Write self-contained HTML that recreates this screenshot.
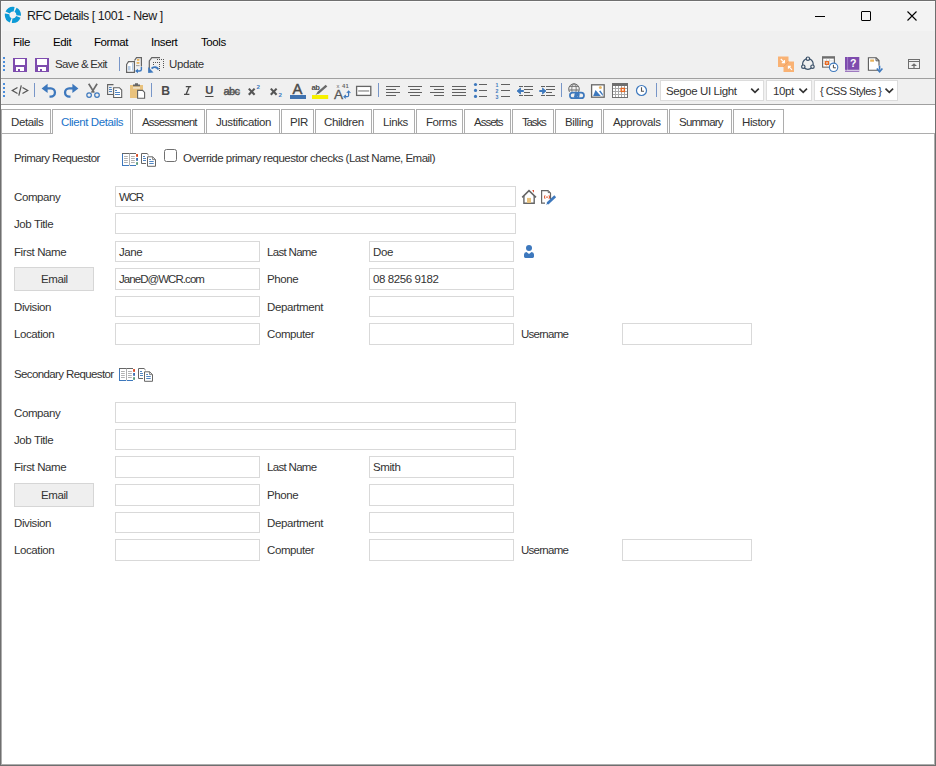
<!DOCTYPE html>
<html><head><meta charset="utf-8">
<style>
*{box-sizing:border-box}
html,body{margin:0;padding:0}
body{width:936px;height:766px;overflow:hidden;position:relative;background:#f0f0f0;font-family:"Liberation Sans",sans-serif;font-size:11px;color:#000}
.a{position:absolute}
.t{position:absolute;white-space:pre;line-height:13px;font-size:11.5px;letter-spacing:-0.4px}
svg{position:absolute;overflow:visible}
#frame{left:0;top:0;width:936px;height:766px;border:1px solid #6f6f6f;pointer-events:none;z-index:50}
.sep{position:absolute;width:1px;background:#7896c8}
.lbl{color:#333}
.inp{position:absolute;background:#fff;border:1px solid #d9d9d9;height:21px}
.itx{position:absolute;white-space:pre;line-height:13px;font-size:11.5px;letter-spacing:-0.4px;color:#333}
.btn{position:absolute;background:#efefef;border:1px solid #d6d6d6;width:80px;height:24px}
.tab{position:absolute;top:109px;height:25px;border:1px solid #adadad;background:#fff}
.tab span{position:absolute;top:6px;white-space:pre;line-height:13px;font-size:11.5px;letter-spacing:-0.4px;color:#333}
.dd{position:absolute;top:80px;height:21px;background:#fff;border:1px solid #dcdcdc}
</style></head><body>
<div class="a" id="frame"></div>
<div class="a" style="left:1px;top:1px;width:934px;height:30px;background:#f3f3f3"></div>
<div class="a" style="left:1px;top:1px;width:934px;height:1px;background:#fbfbfb"></div>
<div class="a" style="left:1px;top:1px;width:1px;height:103px;background:#f7f7f7"></div>

<!-- title bar -->
<svg style="left:0;top:0" width="30" height="30" viewBox="0 0 30 30">
  <circle cx="12.9" cy="14.9" r="5.8" fill="none" stroke="#0b9ad6" stroke-width="4.6" stroke-dasharray="7.6 1.5" stroke-dashoffset="-2.1"/>
</svg>
<div class="t" style="left:27px;top:10px;font-size:12.4px;letter-spacing:-0.45px;color:#1a1a1a">RFC Details [ 1001 - New ]</div>
<div class="a" style="left:815px;top:16px;width:10px;height:1px;background:#000"></div>
<div class="a" style="left:861px;top:11px;width:10px;height:10px;border:1px solid #000;border-radius:1px"></div>
<svg style="left:907px;top:11px" width="10" height="10" viewBox="0 0 10 10"><path d="M0.5 0.5 L9.5 9.5 M9.5 0.5 L0.5 9.5" stroke="#000" stroke-width="1.1"/></svg>

<!-- menu -->
<div class="t" style="left:13px;top:36px">File</div>
<div class="t" style="left:53px;top:36px">Edit</div>
<div class="t" style="left:94px;top:36px">Format</div>
<div class="t" style="left:151px;top:36px">Insert</div>
<div class="t" style="left:201px;top:36px">Tools</div>

<!-- toolbar 1 -->
<div id="tb1"></div>
<div class="t" style="left:55px;top:58px;color:#333;letter-spacing:-0.7px">Save &amp; Exit</div>
<div class="sep" style="left:119px;top:57px;height:14px"></div>
<div class="t" style="left:169px;top:58px;color:#333">Update</div>

<div class="a" style="left:1px;top:78px;width:934px;height:1px;background:#a0a0a0"></div>
<!-- toolbar 2 -->
<div id="tb2"></div>
<div class="sep" style="left:34px;top:83px;height:14px"></div>
<div class="sep" style="left:151px;top:83px;height:14px"></div>
<div class="sep" style="left:378px;top:83px;height:14px"></div>
<div class="sep" style="left:561px;top:83px;height:14px"></div>
<div class="sep" style="left:656px;top:83px;height:14px"></div>
<div class="dd" style="left:660px;width:104px"><span class="t" style="left:5px;top:4px;color:#333">Segoe UI Light</span></div>
<div class="dd" style="left:766px;width:46px"><span class="t" style="left:6px;top:4px;color:#333">10pt</span></div>
<div class="dd" style="left:814px;width:84px"><span class="t" style="left:5px;top:4px;color:#333;letter-spacing:-0.55px;font-size:11px">{ CSS Styles }</span></div>

<div class="a" style="left:1px;top:104px;width:934px;height:1px;background:#a0a0a0"></div>

<!-- tab strip & content -->
<div class="a" style="left:1px;top:105px;width:934px;height:660px;background:#fff"></div>
<div class="a" style="left:1px;top:133px;width:934px;height:632px;border:1px solid #adadad"></div>

<div class="tab" style="left:1px;width:50px"><span style="left:9px">Details</span></div>
<div class="tab" style="left:52px;width:79px;border-bottom:none"><span style="left:8px;color:#1a73c9">Client Details</span></div>
<div class="tab" style="left:132px;width:73px"><span style="left:9px;letter-spacing:-0.8px">Assessment</span></div>
<div class="tab" style="left:206px;width:74px"><span style="left:9px">Justification</span></div>
<div class="tab" style="left:281px;width:33px"><span style="left:8px">PIR</span></div>
<div class="tab" style="left:315px;width:57px"><span style="left:8px">Children</span></div>
<div class="tab" style="left:373px;width:42px"><span style="left:9px">Links</span></div>
<div class="tab" style="left:416px;width:47px"><span style="left:9px">Forms</span></div>
<div class="tab" style="left:464px;width:47px"><span style="left:9px;letter-spacing:-1.0px">Assets</span></div>
<div class="tab" style="left:512px;width:42px"><span style="left:9px;letter-spacing:-1.15px">Tasks</span></div>
<div class="tab" style="left:555px;width:47px"><span style="left:9px">Billing</span></div>
<div class="tab" style="left:603px;width:65px"><span style="left:9px">Approvals</span></div>
<div class="tab" style="left:669px;width:63px"><span style="left:9px;letter-spacing:-0.77px">Summary</span></div>
<div class="tab" style="left:733px;width:51px"><span style="left:8px">History</span></div>

<!-- form -->
<div class="t lbl" style="left:14px;top:152px;letter-spacing:-0.6px">Primary Requestor</div>
<div class="t lbl" style="left:14px;top:191px">Company</div>
<div class="inp" style="left:115px;top:186px;width:401px;height:21px"><span class="itx" style="left:3px;top:4px;letter-spacing:-1.2px">WCR</span></div>
<div class="t lbl" style="left:14px;top:218px">Job Title</div>
<div class="inp" style="left:115px;top:213px;width:401px;height:21px"></div>
<div class="t lbl" style="left:14px;top:246px">First Name</div>
<div class="inp" style="left:115px;top:241px;width:145px;height:21px"><span class="itx" style="left:3px;top:4px">Jane</span></div>
<div class="t lbl" style="left:267px;top:246px;letter-spacing:-0.68px">Last Name</div>
<div class="inp" style="left:369px;top:241px;width:145px;height:21px"><span class="itx" style="left:3px;top:4px">Doe</span></div>
<div class="btn" style="left:14px;top:267px"><span class="t" style="left:26px;top:5px;color:#333">Email</span></div>
<div class="inp" style="left:115px;top:268px;width:145px;height:22px"><span class="itx" style="left:3px;top:4px;letter-spacing:-0.95px">JaneD@WCR.com</span></div>
<div class="t lbl" style="left:267px;top:273px">Phone</div>
<div class="inp" style="left:369px;top:268px;width:145px;height:22px"><span class="itx" style="left:3px;top:4px">08 8256 9182</span></div>
<div class="t lbl" style="left:14px;top:301px">Division</div>
<div class="inp" style="left:115px;top:296px;width:145px;height:21px"></div>
<div class="t lbl" style="left:267px;top:301px">Department</div>
<div class="inp" style="left:369px;top:296px;width:145px;height:21px"></div>
<div class="t lbl" style="left:14px;top:328px">Location</div>
<div class="inp" style="left:115px;top:323px;width:145px;height:22px"></div>
<div class="t lbl" style="left:267px;top:328px">Computer</div>
<div class="inp" style="left:369px;top:323px;width:145px;height:22px"></div>
<div class="t lbl" style="left:521px;top:328px;letter-spacing:-0.74px">Username</div>
<div class="inp" style="left:622px;top:323px;width:130px;height:22px"></div>
<div class="t lbl" style="left:183px;top:152px;letter-spacing:-0.5px">Override primary requestor checks (Last Name, Email)</div>
<div class="t lbl" style="left:14px;top:368px;letter-spacing:-0.62px">Secondary Requestor</div>
<div class="t lbl" style="left:14px;top:407px">Company</div>
<div class="inp" style="left:115px;top:402px;width:401px;height:21px"></div>
<div class="t lbl" style="left:14px;top:434px">Job Title</div>
<div class="inp" style="left:115px;top:429px;width:401px;height:21px"></div>
<div class="t lbl" style="left:14px;top:461px">First Name</div>
<div class="inp" style="left:115px;top:456px;width:145px;height:22px"></div>
<div class="t lbl" style="left:267px;top:461px;letter-spacing:-0.68px">Last Name</div>
<div class="inp" style="left:369px;top:456px;width:145px;height:22px"><span class="itx" style="left:3px;top:4px">Smith</span></div>
<div class="btn" style="left:14px;top:483px"><span class="t" style="left:26px;top:5px;color:#333">Email</span></div>
<div class="inp" style="left:115px;top:484px;width:145px;height:22px"></div>
<div class="t lbl" style="left:267px;top:489px">Phone</div>
<div class="inp" style="left:369px;top:484px;width:145px;height:22px"></div>
<div class="t lbl" style="left:14px;top:517px">Division</div>
<div class="inp" style="left:115px;top:512px;width:145px;height:21px"></div>
<div class="t lbl" style="left:267px;top:517px">Department</div>
<div class="inp" style="left:369px;top:512px;width:145px;height:21px"></div>
<div class="t lbl" style="left:14px;top:544px">Location</div>
<div class="inp" style="left:115px;top:539px;width:145px;height:22px"></div>
<div class="t lbl" style="left:267px;top:544px">Computer</div>
<div class="inp" style="left:369px;top:539px;width:145px;height:22px"></div>
<div class="t lbl" style="left:521px;top:544px;letter-spacing:-0.74px">Username</div>
<div class="inp" style="left:622px;top:539px;width:130px;height:22px"></div>
<!-- /form -->
<!-- icons -->
<svg class="a" style="left:0;top:0;z-index:20" width="936" height="766" viewBox="0 0 936 766">
<!-- grips -->
<g fill="#4b8ddb">
<rect x="3" y="57" width="2" height="2"/><rect x="3" y="61" width="2" height="2"/><rect x="3" y="65" width="2" height="2"/><rect x="3" y="69" width="2" height="2"/>
<rect x="3" y="83" width="2" height="2"/><rect x="3" y="87" width="2" height="2"/><rect x="3" y="91" width="2" height="2"/><rect x="3" y="95" width="2" height="2"/>
</g>
<!-- save icons -->
<g id="sv">
<rect x="13" y="58" width="14" height="14" fill="#7e4cae"/>
<path fill="#fff" d="M15 59 H25 V64.5 Q25 65 24.5 65 H15.5 Q15 65 15 64.5 Z"/>
<rect x="16" y="67" width="8" height="4" fill="#fff"/>
<rect x="18" y="69" width="2" height="2" fill="#7e4cae"/>
</g>
<g transform="translate(22 0)">
<rect x="13" y="58" width="14" height="14" fill="#7e4cae"/>
<path fill="#fff" d="M15 59 H25 V64.5 Q25 65 24.5 65 H15.5 Q15 65 15 64.5 Z"/>
<rect x="16" y="67" width="8" height="4" fill="#fff"/>
<rect x="18" y="69" width="2" height="2" fill="#7e4cae"/>
</g>
<!-- report icon -->
<g fill="none" stroke="#646464" stroke-width="1.2">
<path d="M126.6 64.5 L128.5 61.6 H134.4 V72.4 H126.6 Z" fill="#fff"/>
<path d="M134.5 60.5 L136.5 57.6 H141.4 V66.5"/>
</g>
<rect x="128" y="66" width="2.5" height="4.5" fill="#b7cde6"/>
<rect x="132" y="63" width="1.2" height="7.5" fill="#b7cde6"/>
<rect x="137" y="59" width="2.4" height="1.8" fill="#e8b35c"/>
<rect x="136.6" y="62" width="2.8" height="1.8" fill="#e8b35c"/>
<rect x="136" y="65.2" width="3.6" height="0.9" fill="#999"/>
<path d="M141.4 67 V69.5 Q141.4 71 139.5 71 H136.5" fill="none" stroke="#3d78bd" stroke-width="1.4"/>
<path d="M135 71 L138 68.8 V73.2 Z" fill="#3d78bd"/>
<!-- update icon -->
<path d="M149.3 72 V61 L151.8 57.6 H160" fill="none" stroke="#646464" stroke-width="1.2"/>
<g fill="#555">
<rect x="157" y="59" width="1" height="1"/><rect x="159" y="59" width="1" height="1"/><rect x="161" y="59" width="1" height="1"/><rect x="163" y="59" width="1" height="1"/>
<rect x="163" y="61" width="1" height="1"/><rect x="163" y="63" width="1" height="1"/><rect x="163" y="65" width="1" height="1"/><rect x="163" y="67" width="1" height="1"/>
<rect x="153" y="62" width="1" height="1"/><rect x="155" y="62" width="1" height="1"/><rect x="157" y="62" width="1" height="1"/><rect x="159" y="62" width="1" height="1"/>
<rect x="153" y="64" width="1" height="1"/><rect x="159" y="64" width="1" height="1"/><rect x="159" y="66" width="1" height="1"/><rect x="159" y="68" width="1" height="1"/><rect x="159" y="70" width="1" height="1"/>
</g>
<path d="M158.5 69.5 Q156 65.5 151.5 68.5" fill="none" stroke="#3d78bd" stroke-width="1.8"/>
<path d="M148.2 73 L148.2 67 L153.5 72.6 Z" fill="#3d78bd"/>

<!-- toolbar1 right icons -->
<rect x="778" y="56.5" width="10.5" height="10.5" fill="#f9b274"/>
<rect x="783.5" y="61.5" width="10.5" height="10.5" fill="#f9b274"/>
<path d="M783.3 66.7 L788.7 61.5" stroke="#f29c58" stroke-width="0.8"/>
<path d="M780.8 59 L784.4 62.6 M784.4 60 V62.6 H781.8" stroke="#fff" stroke-width="1.1" fill="none"/>
<path d="M792 69.8 L788.4 66.2 M788.4 68.8 V66.2 H791" stroke="#fff" stroke-width="1.1" fill="none"/>
<g fill="none" stroke="#3a5068" stroke-width="1.2">
<circle cx="807.9" cy="64" r="5.3"/>
<circle cx="807.9" cy="58.7" r="1.7" fill="#f0f0f0"/>
<circle cx="803.3" cy="66.7" r="1.7" fill="#f0f0f0"/>
<circle cx="812.5" cy="66.7" r="1.7" fill="#f0f0f0"/>
</g>
<rect x="822" y="56.2" width="13" height="11.5" fill="#6e6e6e"/>
<rect x="823.2" y="58.6" width="10.6" height="8" fill="#fff"/>
<g fill="#bbb"><rect x="823.2" y="60.7" width="10.6" height="0.5"/><rect x="823.2" y="63.2" width="10.6" height="0.5"/><rect x="826" y="58.6" width="0.5" height="8"/><rect x="829" y="58.6" width="0.5" height="8"/></g>
<rect x="825.4" y="61.7" width="3" height="2.7" fill="none" stroke="#e8671f" stroke-width="1.3"/>
<circle cx="833.6" cy="67.3" r="4.2" fill="#fff" stroke="#3d78bd" stroke-width="1.1"/>
<path d="M833.4 64.8 V67.8 H835.8" fill="none" stroke="#444" stroke-width="1"/>
<path d="M845 57 H859.3 V70.5 H846.5 Q845 70.5 845 69 Z" fill="#7e4cae"/>
<path d="M847.6 57 V70" stroke="#b99ad6" stroke-width="0.6"/>
<path d="M846.6 70.3 H859.3" stroke="#fff" stroke-width="0.9"/><path d="M845 71.3 H859.3" stroke="#7e4cae" stroke-width="0.9"/>

<text x="853.2" y="67.2" font-family="Liberation Sans" font-weight="bold" font-size="10.5" fill="#fff" text-anchor="middle">?</text>
<path d="M868.4 57.8 H876.2 L879 60.6 V70.3 H868.4 Z" fill="#fff" stroke="#5a5a5a" stroke-width="1.1"/>
<path d="M876 57.8 V60.8 H879" fill="none" stroke="#5a5a5a" stroke-width="1"/>
<rect x="870.2" y="59.5" width="3.8" height="2.2" fill="#e8b35c"/>
<path d="M879.6 65.6 V70" stroke="#fff" stroke-width="3"/>
<path d="M879.6 65.6 V69.8" stroke="#3d78bd" stroke-width="1.6"/>
<path d="M876.8 68.5 L879.6 71.8 L882.4 68.5" stroke="#3d78bd" stroke-width="1.6" fill="none"/>
<rect x="908.5" y="59.5" width="11" height="9" fill="none" stroke="#6e6e6e" stroke-width="1"/>
<path d="M908.5 61.5 H919.5" stroke="#6e6e6e" stroke-width="1"/>
<path d="M911 66 L914 63.2 L917 66 Z" fill="#6e6e6e"/>
<rect x="913.4" y="65" width="1.2" height="3" fill="#6e6e6e"/>

<!-- toolbar 2 -->
<path d="M17.5 87.5 L12.3 90.5 L17.5 93.5 M22.5 87.5 L27.7 90.5 L22.5 93.5 M21.3 85.3 L18.8 95.6" fill="none" stroke="#555" stroke-width="1.25"/>
<g fill="none" stroke="#3d78bd" stroke-width="2.3">
<path d="M45.5 88.4 H50.8 A4.15 4.15 0 0 1 50.8 96.7 H49.5"/>
<path d="M74.5 88.4 H69.2 A4.15 4.15 0 0 0 69.2 96.7 H70.5"/>
</g>
<path d="M41.6 88.4 L47.6 83.8 V93 Z" fill="#3d78bd"/>
<path d="M78.4 88.4 L72.4 83.8 V93 Z" fill="#3d78bd"/>
<!-- scissors -->
<path d="M88.7 83.8 L94.2 92.6 M97.1 83.8 L91.6 92.6" stroke="#6a6a6a" stroke-width="1.7" fill="none"/>
<circle cx="89.1" cy="95.1" r="2.3" fill="none" stroke="#3d78bd" stroke-width="1.2"/>
<circle cx="97" cy="95.1" r="2.3" fill="none" stroke="#3d78bd" stroke-width="1.2"/>
<!-- copy -->
<path d="M113.5 84.6 H107.6 V94.5 H113" fill="none" stroke="#626262" stroke-width="1.1"/>
<path d="M113.6 87.7 H119.4 L121.7 90 V97.5 H113.6 Z" fill="#fff" stroke="#626262" stroke-width="1.1"/>
<g fill="#3d78bd"><rect x="109" y="87" width="2.6" height="0.9"/><rect x="109" y="89" width="3" height="0.9"/><rect x="109" y="91" width="3" height="0.9"/>
<rect x="115" y="90.1" width="2" height="0.9"/><rect x="115" y="92.1" width="5" height="0.9"/><rect x="115" y="94.1" width="5" height="0.9"/></g>
<!-- paste -->
<rect x="130" y="85" width="13" height="13" fill="#e9c27d"/>
<rect x="133" y="86.8" width="7" height="2" fill="#f0f0f0" opacity="0.6"/>
<path d="M133 86.2 H140 V84.4 H138 V83.2 H135 V84.4 H133 Z" fill="#666"/>
<path d="M137.6 90.4 H142.6 L144.6 92.4 V98.3 H137.6 Z" fill="#fff" stroke="#606060" stroke-width="1.1"/>
<!-- B I U -->
<text x="161.2" y="95" font-family="Liberation Sans" font-weight="bold" font-size="12.2" fill="#4a4a4a">B</text>
<path d="M185.8 86.6 H191.2 M184 94.4 H189.4 M189.3 86.6 L186 94.4" fill="none" stroke="#4a4a4a" stroke-width="1.35"/>
<text x="205.2" y="94.3" font-family="Liberation Sans" font-weight="bold" font-size="11.3" fill="#4a4a4a">U</text>
<rect x="205.2" y="96" width="8.3" height="1" fill="#4a4a4a"/>
<text x="223.6" y="95.3" font-family="Liberation Sans" font-size="11" letter-spacing="-0.7" fill="#505050" stroke="#505050" stroke-width="0.35">abc</text>
<rect x="224" y="91.7" width="16.2" height="0.9" fill="#555"/>
<path d="M248.8 88.6 L254.6 94.8 M254.6 88.6 L248.8 94.8" stroke="#555" stroke-width="2.1"/>
<text x="256.6" y="88.9" font-family="Liberation Sans" font-weight="bold" font-size="6.2" fill="#3d78bd">2</text>
<path d="M270.8 88.6 L276.6 94.8 M276.6 88.6 L270.8 94.8" stroke="#555" stroke-width="2.1"/>
<text x="278.5" y="97.2" font-family="Liberation Sans" font-weight="bold" font-size="6.2" fill="#3d78bd">2</text>
<!-- font color A -->
<text x="292.4" y="93.8" font-family="Liberation Sans" font-size="14.8" fill="#4a4a4a" stroke="#4a4a4a" stroke-width="0.45">A</text>
<rect x="290" y="95" width="16" height="4" fill="#3f72b0"/>
<!-- highlight -->
<text x="311.6" y="89.6" font-family="Liberation Sans" font-weight="bold" font-size="7.6" letter-spacing="-0.5" fill="#4a4a4a">ab</text>
<path d="M326.5 85.6 L317.8 93.2" stroke="#6a6a6a" stroke-width="2.4"/>
<path d="M317.5 92.2 L315.5 95 L318.6 93.6 Z" fill="#6a6a6a"/>
<rect x="312" y="95" width="16.2" height="4" fill="#f6f000"/>
<!-- font size A x41 -->
<text x="336.6" y="87.9" font-family="Liberation Sans" font-size="5.8" fill="#666">x</text>
<text x="342" y="87.9" font-family="Liberation Sans" font-weight="bold" font-size="5.8" fill="#666" letter-spacing="0.2">41</text>
<text x="334" y="99" font-family="Liberation Sans" font-size="13.6" fill="#555" stroke="#555" stroke-width="0.3">A</text>
<path d="M348.6 91.3 V95.6 Q348.6 96.7 347.4 96.7 H345" fill="none" stroke="#3d78bd" stroke-width="1.2"/>
<path d="M346.8 93 L348.6 91 L350.4 93" fill="none" stroke="#3d78bd" stroke-width="1.1"/>
<path d="M345.8 95 L344 96.7 L345.8 98.4" fill="none" stroke="#3d78bd" stroke-width="1.1"/>
<!-- hr -->
<rect x="356.6" y="86.4" width="14.2" height="9" fill="#fff" stroke="#666" stroke-width="1.3"/>
<rect x="358.2" y="90.1" width="11" height="1.7" fill="#aaa"/>
<!-- align -->
<g fill="#606060">
<rect x="386" y="86" width="14" height="1"/><rect x="386" y="89" width="10" height="1"/><rect x="386" y="92" width="14" height="1"/><rect x="386" y="95" width="10" height="1"/>
<rect x="408" y="86" width="14" height="1"/><rect x="410" y="89" width="10" height="1"/><rect x="408" y="92" width="14" height="1"/><rect x="410" y="95" width="10" height="1"/>
<rect x="430" y="86" width="14" height="1"/><rect x="434" y="89" width="10" height="1"/><rect x="430" y="92" width="14" height="1"/><rect x="434" y="95" width="10" height="1"/>
<rect x="452" y="86" width="14" height="1"/><rect x="452" y="89" width="14" height="1"/><rect x="452" y="92" width="14" height="1"/><rect x="452" y="95" width="14" height="1"/>
<rect x="479" y="84" width="8" height="1"/><rect x="479" y="90" width="8" height="1"/><rect x="479" y="96" width="8" height="1"/>
<rect x="501" y="84" width="9" height="1"/><rect x="501" y="90" width="9" height="1"/><rect x="501" y="96" width="9" height="1"/>
<rect x="519" y="86" width="4" height="1"/><rect x="524" y="86" width="9" height="1"/><rect x="524" y="89" width="9" height="1"/><rect x="524" y="92" width="6" height="1"/><rect x="519" y="95" width="4" height="1"/><rect x="524" y="95" width="9" height="1"/>
<rect x="541" y="86" width="4" height="1"/><rect x="546" y="86" width="9" height="1"/><rect x="546" y="89" width="9" height="1"/><rect x="546" y="92" width="6" height="1"/><rect x="541" y="95" width="4" height="1"/><rect x="546" y="95" width="9" height="1"/>
</g>
<g fill="#3d78bd">
<circle cx="475.5" cy="84.5" r="1.6"/><circle cx="475.5" cy="90.4" r="1.6"/><circle cx="475.5" cy="96.4" r="1.6"/>
</g>
<text x="495.6" y="87" font-family="Liberation Sans" font-weight="bold" font-size="5.2" fill="#3d78bd">1</text>
<text x="495.6" y="93" font-family="Liberation Sans" font-weight="bold" font-size="5.2" fill="#3d78bd">2</text>
<text x="495.6" y="99" font-family="Liberation Sans" font-weight="bold" font-size="5.2" fill="#3d78bd">3</text>
<path d="M523.8 91 H519.5" stroke="#3d78bd" stroke-width="2"/>
<path d="M517 91 L520.5 88 L520.5 94 Z" fill="#3d78bd" stroke="#3d78bd" stroke-width="0.8" stroke-linejoin="round"/>
<path d="M539.3 91 H543.5" stroke="#3d78bd" stroke-width="2"/>
<path d="M546 91 L542.5 88 L542.5 94 Z" fill="#3d78bd" stroke="#3d78bd" stroke-width="0.8" stroke-linejoin="round"/>
<!-- link -->
<clipPath id="gclip"><rect x="560" y="80" width="30" height="12"/></clipPath>
<g fill="none" stroke="#6a6a6a" stroke-width="1" clip-path="url(#gclip)">
<circle cx="574" cy="89.1" r="5.3"/>
<ellipse cx="574" cy="89.1" rx="2.2" ry="5.3" stroke-width="0.8"/>
<path d="M570 86.3 H578 M569.2 90 H578.8"/>
</g>
<rect x="569.9" y="92.6" width="8.8" height="5.6" rx="2.8" fill="none" stroke="#3d78bd" stroke-width="1.7"/>
<rect x="575.2" y="92.6" width="8.8" height="5.6" rx="2.8" fill="none" stroke="#3d78bd" stroke-width="1.7"/>
<path d="M574.6 97.6 L579 93.2" stroke="#3d78bd" stroke-width="2.4"/>
<!-- image -->
<rect x="591.6" y="84.8" width="12.6" height="12.4" fill="#fff" stroke="#666" stroke-width="1.3"/>
<circle cx="600.4" cy="87.6" r="1.5" fill="#e8b96a"/>
<path d="M593.2 95.9 L595.5 90 L600.8 95.9 Z" fill="#3d78bd"/>
<path d="M599 91.2 L600.4 90.6 L602.8 94 L602.8 96 Z" fill="#3d78bd"/>
<!-- table -->
<rect x="612" y="83" width="16" height="15" fill="#fff"/>
<rect x="612" y="83" width="16" height="3" fill="#6e6e6e"/>
<g fill="#a8a8a8"><rect x="615" y="86" width="1" height="11"/><rect x="618" y="86" width="1" height="11"/><rect x="621" y="86" width="1" height="11"/><rect x="624" y="86" width="1" height="11"/>
<rect x="613" y="88" width="14" height="1"/><rect x="613" y="91" width="14" height="1"/><rect x="613" y="94" width="14" height="1"/></g>
<rect x="612.5" y="83.5" width="15" height="14" fill="none" stroke="#6e6e6e" stroke-width="1"/>
<rect x="621.2" y="88.4" width="3.2" height="3" fill="#fff" stroke="#e8671f" stroke-width="1.4"/>
<!-- clock -->
<circle cx="641.5" cy="90.5" r="5" fill="#fff" stroke="#3d78bd" stroke-width="1.2"/>
<path d="M641.5 87.3 V91.2 H644" fill="none" stroke="#555" stroke-width="1.1"/>

<!-- chevrons -->
<path d="M751.2 88.6 L755 92.4 L758.8 88.6 M799.4 88.6 L803.2 92.4 L807 88.6 M885.5 88.6 L889.3 92.4 L893.1 88.6" fill="none" stroke="#333" stroke-width="1.6"/>
<!-- content icons -->
<g id="ab">
<path d="M122.5 153 V166 M122 165.5 H129 M130 165.5 H136" fill="none" stroke="#3d78bd" stroke-width="1"/>
<path d="M122 153.5 H136" fill="none" stroke="#666" stroke-width="1"/>
<path d="M129.5 153.5 V165.5" fill="none" stroke="#b0b0b0" stroke-width="1"/>
<g fill="#aaa"><rect x="124" y="156" width="3.8" height="0.9"/><rect x="124" y="158" width="3.8" height="0.9"/><rect x="124" y="160" width="3.8" height="0.9"/><rect x="124" y="162" width="3.8" height="0.9"/>
<rect x="131" y="156" width="3.8" height="0.9"/><rect x="131" y="158" width="3.8" height="0.9"/><rect x="131" y="160" width="3.8" height="0.9"/><rect x="131" y="162" width="3.8" height="0.9"/></g>
<rect x="136.1" y="154.1" width="1.9" height="2.7" fill="#d9481f"/>
<rect x="136.1" y="158" width="1.9" height="2.8" fill="#3d6fb0"/>
<rect x="136.1" y="162.2" width="1.9" height="2.6" fill="#5a9c7a"/>
<path d="M146 163.5 H141.5 V153.5 H147 L148.6 155" fill="none" stroke="#666" stroke-width="1"/>
<path d="M147.5 156.8 H152.6 L155.5 159.6 V166.3 H147.5 Z" fill="#fff" stroke="#666" stroke-width="1"/>
<path d="M152.6 156.8 V159.6 H155.5" fill="none" stroke="#666" stroke-width="0.8"/>
<g fill="#3d78bd"><rect x="143" y="156" width="2" height="0.9"/><rect x="143" y="158" width="3" height="0.9"/><rect x="143" y="160" width="3" height="0.9"/>
<rect x="149.2" y="159.1" width="1.8" height="0.9"/><rect x="149.2" y="161.1" width="4.5" height="0.9"/><rect x="149.2" y="163.1" width="4.5" height="0.9"/></g>
</g>
<g transform="translate(-3 215)">
<path d="M122.5 153 V166 M122 165.5 H129 M130 165.5 H136" fill="none" stroke="#3d78bd" stroke-width="1"/>
<path d="M122 153.5 H136" fill="none" stroke="#666" stroke-width="1"/>
<path d="M129.5 153.5 V165.5" fill="none" stroke="#b0b0b0" stroke-width="1"/>
<g fill="#aaa"><rect x="124" y="156" width="3.8" height="0.9"/><rect x="124" y="158" width="3.8" height="0.9"/><rect x="124" y="160" width="3.8" height="0.9"/><rect x="124" y="162" width="3.8" height="0.9"/>
<rect x="131" y="156" width="3.8" height="0.9"/><rect x="131" y="158" width="3.8" height="0.9"/><rect x="131" y="160" width="3.8" height="0.9"/><rect x="131" y="162" width="3.8" height="0.9"/></g>
<rect x="136.1" y="154.1" width="1.9" height="2.7" fill="#d9481f"/>
<rect x="136.1" y="158" width="1.9" height="2.8" fill="#3d6fb0"/>
<rect x="136.1" y="162.2" width="1.9" height="2.6" fill="#5a9c7a"/>
<path d="M146 163.5 H141.5 V153.5 H147 L148.6 155" fill="none" stroke="#666" stroke-width="1"/>
<path d="M147.5 156.8 H152.6 L155.5 159.6 V166.3 H147.5 Z" fill="#fff" stroke="#666" stroke-width="1"/>
<path d="M152.6 156.8 V159.6 H155.5" fill="none" stroke="#666" stroke-width="0.8"/>
<g fill="#3d78bd"><rect x="143" y="156" width="2" height="0.9"/><rect x="143" y="158" width="3" height="0.9"/><rect x="143" y="160" width="3" height="0.9"/>
<rect x="149.2" y="159.1" width="1.8" height="0.9"/><rect x="149.2" y="161.1" width="4.5" height="0.9"/><rect x="149.2" y="163.1" width="4.5" height="0.9"/></g>
</g>
<!-- checkbox -->
<rect x="164.5" y="149.5" width="12" height="12" rx="2" fill="#fff" stroke="#707070" stroke-width="1"/>
<!-- house -->
<path d="M522.2 197.4 L529 190.6 L536 197.4" fill="none" stroke="#666" stroke-width="1.5"/>
<path d="M523.9 196 V203.3 H534.2 V196" fill="none" stroke="#666" stroke-width="1.4"/>
<rect x="527" y="197.9" width="4" height="5" fill="#e9c27d"/>
<path d="M532.2 190.2 L534 189.9 L533.8 192.8 Z" fill="#d9401f"/>
<!-- doc pencil -->
<path d="M548.2 190.6 H541.6 V203.2 H545 M550.5 193 V199" fill="none" stroke="#666" stroke-width="1.2"/>
<path d="M548.2 190.6 V192.6 H550.5 Z" fill="none" stroke="#666" stroke-width="1"/>
<path d="M545 195.3 Q543.8 197 545 198.8 M549 195.3 Q550.2 197 549 198.8 M545.8 197.1 H548.2" fill="none" stroke="#e0542a" stroke-width="1"/>
<path d="M555.2 196.2 L547.5 203.5" stroke="#3d78bd" stroke-width="2.6"/>
<path d="M547.5 202.2 L546 204.8 L548.8 203.7 Z" fill="#3d78bd"/>
<!-- person -->
<circle cx="529" cy="247.9" r="3" fill="#3d78bd"/>
<path d="M524 254.5 Q524 252 526.5 251.9 L529 254 L531.5 251.9 Q534 252 534 254.5 V256.5 Q534 257.9 532.6 257.9 H525.4 Q524 257.9 524 256.5 Z" fill="#3d78bd"/>
</svg>
<!-- /icons -->
</body></html>
